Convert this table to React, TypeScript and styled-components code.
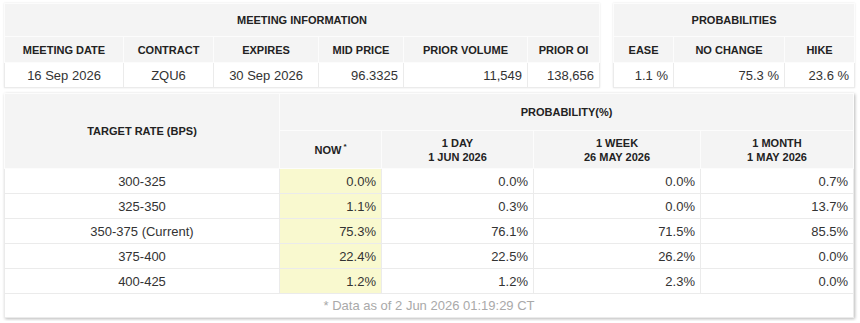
import React from 'react';
import styled, { createGlobalStyle } from 'styled-components';

const Global = createGlobalStyle`
  html, body { margin: 0; padding: 0; background: #fff; }
  body { font-family: "Liberation Sans", Arial, sans-serif; color: #333; }
  * { box-sizing: border-box; }
`;

const Page = styled.div`
  padding: 3px 4px;
  display: flex;
  flex-direction: column;
  gap: 5px;
  width: 857px;
`;

const TopRow = styled.div`
  display: flex;
  gap: 13px;
  align-items: flex-start;
`;

const Table = styled.table<{ $w: number; $strong?: boolean }>`
  width: ${p => p.$w}px;
  border-collapse: collapse;
  table-layout: fixed;
  background: #fff;
  box-shadow: ${p =>
    p.$strong
      ? '1px 1px 3px rgba(0,0,0,0.28)'
      : '0 0 2px rgba(0,0,0,0.10)'};
`;

const Th = styled.th<{ $h?: number }>`
  background: #f4f4f4;
  border: 1px solid #fcfcfc;
  font-size: 11px;
  font-weight: bold;
  color: #222;
  text-align: center;
  padding: 0 4px;
  line-height: 14px;
  height: ${p => (p.$h ? `${p.$h}px` : 'auto')};
  white-space: nowrap;
`;

const Sup = styled.sup`
  font-size: 8px;
  vertical-align: top;
  position: relative;
  top: -3px;
  margin-left: 2px;
`;

const Td = styled.td<{ $align?: 'left' | 'center' | 'right'; $now?: boolean; $h?: number }>`
  border: 1px solid #ebebeb;
  font-size: 13px;
  color: #333;
  text-align: ${p => p.$align || 'right'};
  padding: 0 5px;
  height: ${p => (p.$h ? `${p.$h}px` : '25px')};
  background: ${p => (p.$now ? '#f9f9cf' : '#fff')};
  white-space: nowrap;
`;

const Footer = styled.td`
  border: 1px solid #ebebeb;
  font-size: 13px;
  color: #a9a9a9;
  text-align: center;
  height: 24px;
`;

const meetingCols = [119, 90, 105, 85, 124, 72];
const probCols = [60, 111, 70];
const bigCols = [275, 102, 152, 167, 153];

const rows = [
  ['300-325', '0.0%', '0.0%', '0.0%', '0.7%'],
  ['325-350', '1.1%', '0.3%', '0.0%', '13.7%'],
  ['350-375 (Current)', '75.3%', '76.1%', '71.5%', '85.5%'],
  ['375-400', '22.4%', '22.5%', '26.2%', '0.0%'],
  ['400-425', '1.2%', '1.2%', '2.3%', '0.0%'],
];

const Cols: React.FC<{ widths: number[] }> = ({ widths }) => (
  <colgroup>
    {widths.map((w, i) => (
      <col key={i} style={{ width: w }} />
    ))}
  </colgroup>
);

export default function App() {
  return (
    <>
      <Global />
      <Page>
        <TopRow>
          <Table $w={595}>
            <Cols widths={meetingCols} />
            <thead>
              <tr>
                <Th colSpan={6} $h={33}>MEETING INFORMATION</Th>
              </tr>
              <tr>
                <Th $h={26}>MEETING DATE</Th>
                <Th $h={26}>CONTRACT</Th>
                <Th $h={26}>EXPIRES</Th>
                <Th $h={26}>MID PRICE</Th>
                <Th $h={26}>PRIOR VOLUME</Th>
                <Th $h={26}>PRIOR OI</Th>
              </tr>
            </thead>
            <tbody>
              <tr>
                <Td $align="center">16 Sep 2026</Td>
                <Td $align="center">ZQU6</Td>
                <Td $align="center">30 Sep 2026</Td>
                <Td>96.3325</Td>
                <Td>11,549</Td>
                <Td>138,656</Td>
              </tr>
            </tbody>
          </Table>
          <Table $w={241}>
            <Cols widths={probCols} />
            <thead>
              <tr>
                <Th colSpan={3} $h={33}>PROBABILITIES</Th>
              </tr>
              <tr>
                <Th $h={26}>EASE</Th>
                <Th $h={26}>NO CHANGE</Th>
                <Th $h={26}>HIKE</Th>
              </tr>
            </thead>
            <tbody>
              <tr>
                <Td>1.1 %</Td>
                <Td>75.3 %</Td>
                <Td>23.6 %</Td>
              </tr>
            </tbody>
          </Table>
        </TopRow>
        <Table $w={849} $strong>
          <Cols widths={bigCols} />
          <thead>
            <tr>
              <Th rowSpan={2}>TARGET RATE (BPS)</Th>
              <Th colSpan={4} $h={37}>PROBABILITY(%)</Th>
            </tr>
            <tr>
              <Th $h={38}>
                NOW<Sup>*</Sup>
              </Th>
              <Th $h={38}>
                1 DAY
                <br />1 JUN 2026
              </Th>
              <Th $h={38}>
                1 WEEK
                <br />26 MAY 2026
              </Th>
              <Th $h={38}>
                1 MONTH
                <br />1 MAY 2026
              </Th>
            </tr>
          </thead>
          <tbody>
            {rows.map(r => (
              <tr key={r[0]}>
                <Td $align="center">{r[0]}</Td>
                <Td $now>{r[1]}</Td>
                <Td>{r[2]}</Td>
                <Td>{r[3]}</Td>
                <Td>{r[4]}</Td>
              </tr>
            ))}
            <tr>
              <Footer colSpan={5}>* Data as of 2 Jun 2026 01:19:29 CT</Footer>
            </tr>
          </tbody>
        </Table>
      </Page>
    </>
  );
}
